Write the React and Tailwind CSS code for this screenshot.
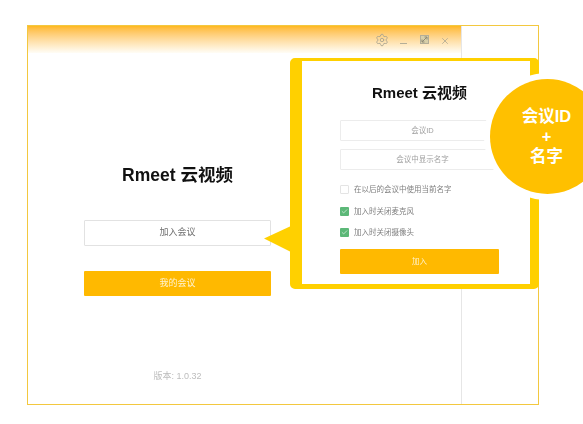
import React from "react";
import { Settings, X, Check } from "lucide-react";

const FONT = "font-['Liberation_Sans','Noto_Sans_CJK_SC',sans-serif]";

const Option = ({ checked, label }) => (
  <div className="flex items-center gap-[5px] h-[9px]">
    {checked ? (
      <div className="w-[9px] h-[9px] rounded-[1px] bg-[#5cb878] flex items-center justify-center">
        <Check size={7} color="#ffffff" strokeWidth={2} />
      </div>
    ) : (
      <div className="w-[9px] h-[9px] rounded-[1px] border border-[#e4e4e4] bg-white"></div>
    )}
    <span className="text-[7.5px] leading-[9px] text-[#808080] blur-[0.3px]">{label}</span>
  </div>
);

const App = () => {
  return (
    <div className={`relative w-[583px] h-[424px] overflow-hidden bg-white pt-[25px] pl-[27px] ${FONT}`}>
      <div className="w-[512px] h-[380px] border-[1.5px] border-[#f3c83f] flex">
        <div className="w-[433px] flex flex-col">
          <div className="h-[27px] bg-gradient-to-b from-[#ffb81a] to-[#fffdf6] flex justify-end items-start gap-[9px] pt-[7px] pr-[11px] text-[#a9a48f]">
            <Settings size={14} strokeWidth={1.5} className="mr-[2px]" />
            <div className="w-[7px] h-[12px] flex items-end pb-[1px]">
              <div className="w-[7px] h-[1.5px] bg-[#b4ae98]"></div>
            </div>
            <svg width="9" height="12" viewBox="0 0 9 12" className="ml-[4px]">
              <rect x="0.5" y="2.5" width="8" height="8" fill="#d8cfa8" stroke="#b4ae98" strokeWidth="1" />
              <path d="M2 9 L7 4 M4.5 4 H7 V6.5 M2 6.5 V9 H4.5" fill="none" stroke="#8f8a76" strokeWidth="1" />
            </svg>
            <X size={10} strokeWidth={1.8} className="mt-[3px] ml-[2px]" />
          </div>
          <div className="flex-1 flex flex-col items-center pr-[134px]">
            <h1 className="mt-[110px] text-[17.5px] leading-[24px] font-bold text-[#111111] blur-[0.4px]">Rmeet 云视频</h1>
            <button className="mt-[33px] w-[187px] h-[26px] bg-white border border-[#e2e2e2] rounded-[1px] text-[9px] text-[#6f6f6f]">
              <span className="blur-[0.3px]">加入会议</span>
            </button>
            <button className="mt-[25px] w-[187px] h-[25px] bg-[#ffb900] rounded-[1px] text-[9px] text-[#fff3cf]">
              <span className="blur-[0.3px]">我的会议</span>
            </button>
            <p className="mt-[73px] text-[9px] leading-[14px] text-[#bdbdbd] blur-[0.3px]">版本: 1.0.32</p>
          </div>
        </div>
        <div className="flex-1 border-l border-[#e6e6e6]"></div>
      </div>

      <svg width="27" height="26" viewBox="0 0 27 26" className="absolute left-[264px] top-[226px]">
        <path d="M0 12.5 L27 0 V26 Z" fill="#ffd000" />
      </svg>

      <div className="absolute left-[290px] top-[58px] w-[249px] h-[231px] bg-white border-[#ffd000] border-l-[12px] border-t-[3px] border-r-[9px] border-b-[5px] rounded-[5px] flex flex-col pl-[38px]">
        <h2 className="mt-[22px] w-[159px] text-center text-[15px] leading-[20px] font-bold text-[#111111] blur-[0.4px]">Rmeet 云视频</h2>
        <div className="mt-[17px] w-[165px] h-[21px] border border-[#ececec] rounded-[1px] flex items-center justify-center text-[7.5px] text-[#a0a0a0]">
          <span className="blur-[0.3px]">会议ID</span>
        </div>
        <div className="mt-[8px] w-[165px] h-[21px] border border-[#ececec] rounded-[1px] flex items-center justify-center text-[7.5px] text-[#a0a0a0]">
          <span className="blur-[0.3px]">会议中显示名字</span>
        </div>
        <div className="mt-[15px] flex flex-col gap-[12.5px]">
          <Option label="在以后的会议中使用当前名字" />
          <Option checked label="加入时关闭麦克风" />
          <Option checked label="加入时关闭摄像头" />
        </div>
        <button className="mt-[12px] w-[159px] h-[25px] bg-[#ffb900] rounded-[1px] text-[7.5px] text-[#fff3cf]">
          <span className="blur-[0.3px]">加入</span>
        </button>
      </div>

      <div className="absolute left-[484px] top-[73px] w-[127px] h-[127px] rounded-full bg-white flex items-center justify-center">
        <div className="w-[115px] h-[115px] rounded-full bg-[#ffc000] flex flex-col items-center justify-center text-white font-bold text-[16.5px] leading-[20px] pb-[2px] pr-[2px]">
          <span>会议ID</span>
          <span>+</span>
          <span>名字</span>
        </div>
      </div>
    </div>
  );
};

export default App;
